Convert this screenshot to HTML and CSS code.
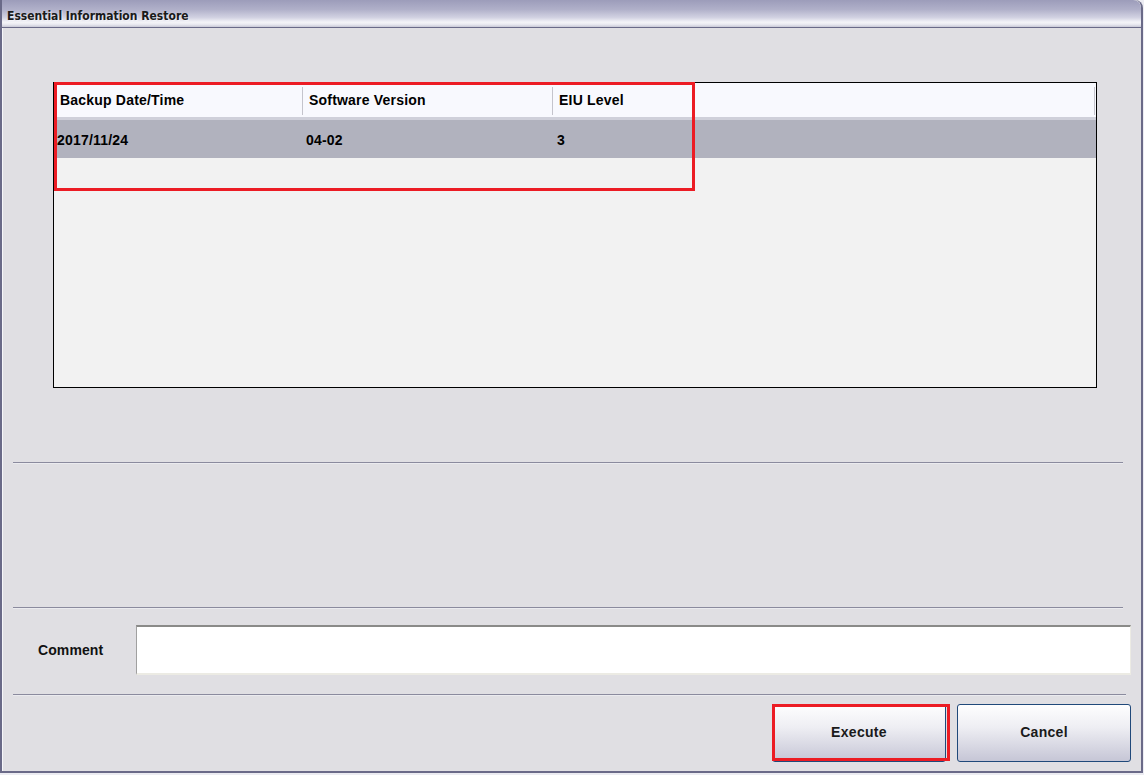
FILE: index.html
```html
<!DOCTYPE html>
<html>
<head>
<meta charset="utf-8">
<link rel="stylesheet" href="styles.css">
</head>
<body>
<div class="window">
  <div class="titlebar"><span class="title">Essential Information Restore</span></div>
  <div class="content">
    <div class="table">
      <div class="thead">
        <div class="th c1">Backup Date/Time</div>
        <div class="th c2">Software Version</div>
        <div class="th c3">EIU Level</div>
      </div>
      <div class="row selected">
        <div class="td c1">2017/11/24</div>
        <div class="td c2">04-02</div>
        <div class="td c3">3</div>
      </div>
      <div class="mark-table"></div>
    </div>
    <div class="sep sep1"></div>
    <div class="sep sep2"></div>
    <div class="comment-row">
      <label class="comment-label">Comment</label>
      <div class="comment-input"></div>
    </div>
    <div class="sep sep3"></div>
    <div class="buttons">
      <div class="btn-wrap">
        <button class="btn">Execute</button>
        <div class="mark-btn"></div>
      </div>
      <button class="btn">Cancel</button>
    </div>
  </div>
</div>
</body>
</html>
```

FILE: styles.css
```css
html, body {
  margin: 0;
  padding: 0;
}
body {
  width: 1144px;
  height: 775px;
  background: #ececf2;
  font-family: "Liberation Sans", Arial, sans-serif;
  overflow: hidden;
}
.window {
  width: 1143px;
  height: 773px;
  box-sizing: border-box;
  border-left: 2px solid #6a6a88;
  border-right: 2px solid #6a6a88;
  border-bottom: 2px solid #6a6a88;
  border-top-right-radius: 8px;
  background: #e0dfe3;
  display: flex;
  flex-direction: column;
  overflow: hidden;
}
.titlebar {
  height: 27px;
  flex: 0 0 auto;
  border-bottom: 1px solid #6a6a88;
  background: linear-gradient(to bottom, #9c9cba 0%, #b0b0c9 35%, #d2d2e2 65%, #f4f4f8 82%, #eaeaf1 90%, #c8c8d6 100%);
  display: flex;
  align-items: center;
  padding-left: 5px;
  border-top-right-radius: 8px;
}
.title {
  font-family: "DejaVu Sans Condensed", "DejaVu Sans", sans-serif;
  font-weight: bold;
  font-size: 12px;
  color: #1a1a1a;
  text-shadow: 1px 1px 0 rgba(255,255,255,0.5);
  position: relative;
  top: 2px;
}
.content {
  flex: 1;
  display: flex;
  flex-direction: column;
  box-shadow: inset 1px 0 0 #f6f6fa;
  padding-right: 10px;
}
.table {
  position: relative;
  margin-top: 54px;
  margin-left: 51px;
  width: 1044px;
  height: 306px;
  box-sizing: border-box;
  border: 1px solid #000;
  background: #f2f2f2;
}
.thead {
  display: flex;
  height: 34px;
  background: #f8f9fe;
  border-bottom: 3px solid #cfd0da;
  box-shadow: 0 1px 0 #bfc0cc;
  font-weight: bold;
  font-size: 14px;
  letter-spacing: 0.2px;
  color: #000;
}
.th {
  display: flex;
  align-items: center;
  padding-left: 6px;
  box-sizing: border-box;
  position: relative;
}
.th::after {
  content: "";
  position: absolute;
  right: 0;
  top: 4px;
  bottom: 2px;
  width: 1px;
  background: #c4c4cc;
}
.th.c1 { width: 249px; }
.th.c2 { width: 250px; }
.th.c3 { width: 542px; }
.row {
  display: flex;
  height: 38px;
  padding-top: 2px;
  box-sizing: border-box;
  font-weight: bold;
  font-size: 14px;
  letter-spacing: 0.2px;
  color: #000;
}
.row.selected {
  background: #b1b2be;
}
.td {
  display: flex;
  align-items: center;
  padding-left: 3px;
  box-sizing: border-box;
}
.td.c1 { width: 249px; }
.td.c2 { width: 251px; }
.td.c3 { flex: 1; }
.mark-table {
  position: absolute;
  left: 0;
  top: -1px;
  width: 641px;
  height: 109px;
  box-sizing: border-box;
  border: 3px solid #ec1c24;
}
.sep {
  margin-left: 11px;
  width: 1110px;
  height: 1px;
  background: #8b8b9e;
  border-bottom: 1px solid #ebebef;
}
.sep1 { margin-top: 74px; }
.sep2 { margin-top: 143px; }
.sep3 { margin-top: 19px; width: 1113px; }
.comment-row {
  display: flex;
  align-items: center;
  margin-top: 16px;
  height: 50px;
}
.comment-label {
  width: 98px;
  padding-left: 36px;
  box-sizing: content-box;
  font-weight: bold;
  font-size: 14px;
  color: #111;
  letter-spacing: 0.1px;
}
.comment-input {
  flex: 1;
  height: 50px;
  box-sizing: border-box;
  background: #fff;
  border-top: 2px solid #8a8a88;
  border-left: 1px solid #a0a0a0;
  border-right: 1px solid #ecebe4;
  border-bottom: 2px solid #ecebe4;
}
.buttons {
  display: flex;
  justify-content: flex-end;
  gap: 11px;
  margin-top: 8px;
}
.btn-wrap {
  position: relative;
  display: flex;
}
.btn {
  width: 174px;
  height: 58px;
  box-sizing: border-box;
  border: 1px solid #20497a;
  border-radius: 3px;
  background: linear-gradient(to bottom, #fefefe 0%, #eeeef3 40%, #c6c6d6 100%);
  font-family: "Liberation Sans", Arial, sans-serif;
  font-weight: bold;
  font-size: 14px;
  color: #1a1a1a;
  letter-spacing: 0.3px;
  padding: 0 0 2px 0;
}
.mark-btn {
  position: absolute;
  left: 0;
  top: 0;
  width: 178px;
  height: 57px;
  box-sizing: border-box;
  border: 3px solid #ec1c24;
}
```
